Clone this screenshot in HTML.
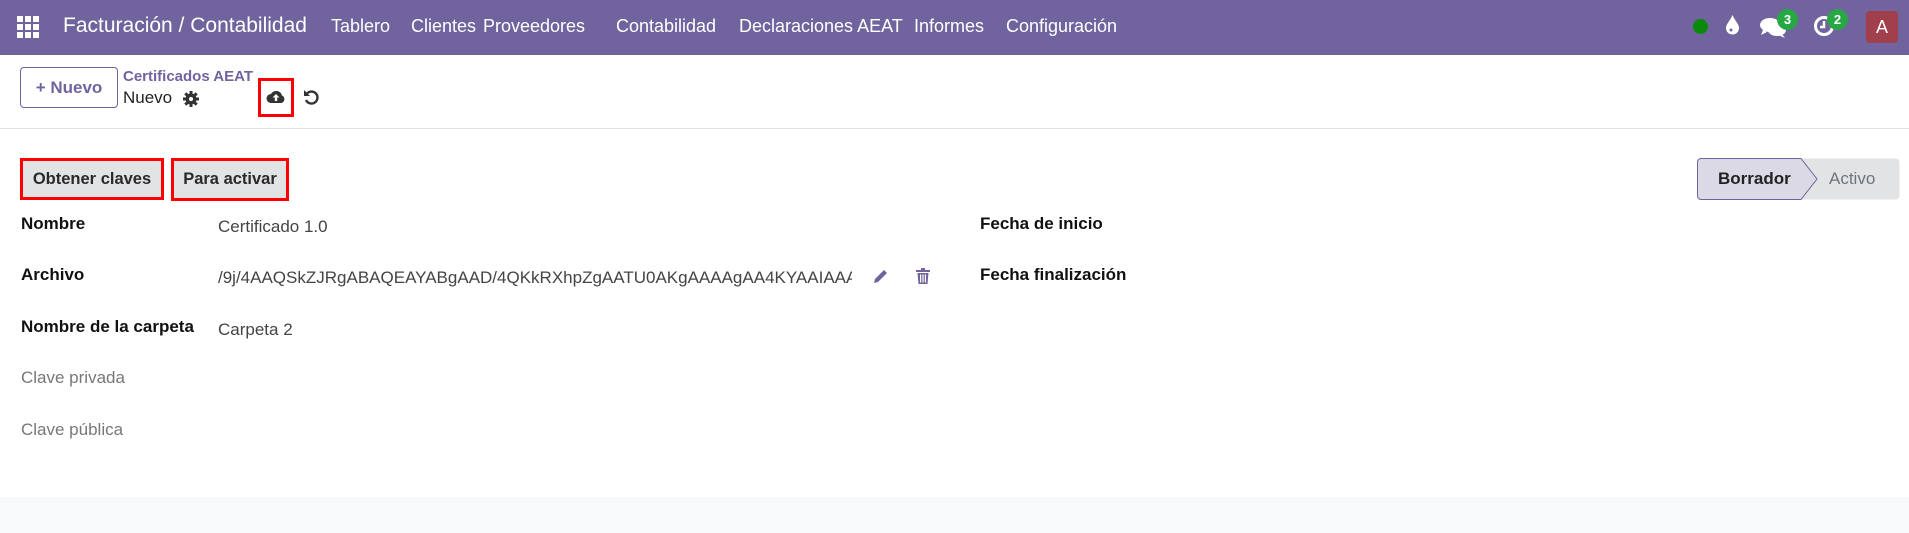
<!DOCTYPE html>
<html><head><meta charset="utf-8"><style>
*{box-sizing:border-box;margin:0;padding:0}
body{width:1909px;height:533px;overflow:hidden;background:#fff;font-family:"Liberation Sans",sans-serif;color:#212529;position:relative}
.nav{position:absolute;left:0;top:0;width:1909px;height:55px;background:#71639e;color:#fff}
.nav span{position:absolute;top:16px;font-size:18px;white-space:nowrap}
.abs{position:absolute;white-space:nowrap}
.btn{position:absolute;background:#e2e3e5;border:3px solid #f00;font-size:16.5px;font-weight:bold;color:#2a2a2a;display:flex;align-items:center;justify-content:center}
.lbl{position:absolute;left:21px;font-size:17px;font-weight:bold;color:#111}
.val{position:absolute;left:218px;font-size:17px;color:#444}
.badge{position:absolute;width:21px;height:21px;border-radius:50%;background:#28a745;color:#fff;font-size:13px;font-weight:bold;text-align:center;line-height:21px}
</style></head><body>
<div class="nav">
<svg class="abs" style="left:17px;top:16px" width="22" height="22" viewBox="0 0 22 22" fill="#fff"><rect x="0" y="0" width="6" height="6"/><rect x="8" y="0" width="6" height="6"/><rect x="16" y="0" width="6" height="6"/><rect x="0" y="8" width="6" height="6"/><rect x="8" y="8" width="6" height="6"/><rect x="16" y="8" width="6" height="6"/><rect x="0" y="16" width="6" height="6"/><rect x="8" y="16" width="6" height="6"/><rect x="16" y="16" width="6" height="6"/></svg>
<span style="left:63px;top:14px;font-size:21px">Facturación / Contabilidad</span>
<span style="left:331px">Tablero</span>
<span style="left:411px">Clientes</span>
<span style="left:483px">Proveedores</span>
<span style="left:616px">Contabilidad</span>
<span style="left:739px">Declaraciones AEAT</span>
<span style="left:914px">Informes</span>
<span style="left:1006px">Configuración</span>
<div class="abs" style="left:1693px;top:19px;width:15px;height:15px;border-radius:50%;background:#0a8a0a"></div>
<svg class="abs" style="left:1726px;top:15px" width="13" height="20" viewBox="0 0 13 20"><path d="M6.5 0C4 6 0 9 0 13a6.5 6.5 0 0013 0C13 9 9 6 6.5 0z" fill="#fff"/><circle cx="5" cy="15" r="1.5" fill="#71639e"/></svg>
<svg class="abs" style="left:1760px;top:17px" width="26" height="22" viewBox="0 0 26 22" fill="#fff"><ellipse cx="10" cy="8" rx="10" ry="7"/><path d="M3 13l-2 5 6-3z"/><ellipse cx="17" cy="13" rx="9" ry="6"/><path d="M22 17l3 4-7-3z"/></svg>
<div class="badge" style="left:1777px;top:9px">3</div>
<svg class="abs" style="left:1813px;top:15px" width="22" height="22" viewBox="0 0 22 22"><circle cx="11" cy="11" r="8.5" fill="none" stroke="#fff" stroke-width="3"/><path d="M11 6v6h-4" stroke="#fff" stroke-width="2.5" fill="none"/></svg>
<div class="badge" style="left:1827px;top:9px">2</div>
<div class="abs" style="left:1866px;top:11px;width:32px;height:32px;border-radius:4px;background:#a1404c;color:#fff;font-size:18px;text-align:center;line-height:32px">A</div>
</div>
<div class="abs" style="left:20px;top:67px;width:98px;height:41px;border:1px solid #71639e;border-radius:4px;color:#71639e;font-size:17px;font-weight:bold;display:flex;align-items:center;justify-content:center">+ Nuevo</div>
<div class="abs" style="left:123px;top:68px;font-size:15px;font-weight:bold;color:#71639e">Certificados AEAT</div>
<div class="abs" style="left:123px;top:88px;font-size:17px;color:#222">Nuevo</div>
<svg class="abs" style="left:183px;top:91px" width="16" height="16" viewBox="0 0 16 16"><circle cx="8" cy="8" r="5.5" fill="#333"/><g stroke="#333" stroke-width="3"><path d="M8 0v16M0 8h16M2.3 2.3l11.4 11.4M13.7 2.3L2.3 13.7"/></g><circle cx="8" cy="8" r="2" fill="#fff"/></svg>
<div class="abs" style="left:258px;top:78px;width:36px;height:39px;border:3px solid #f00"></div>
<svg class="abs" style="left:266px;top:88px" width="20" height="16" viewBox="0 0 20 16"><path d="M5 15a4.5 4.5 0 010-9 6 6 0 0111 1.5 4 4 0 01-.5 7.5z" fill="#333"/><path d="M10 6l-3.5 3.5h2.3V13h2.4V9.5h2.3z" fill="#fff"/></svg>
<svg class="abs" style="left:303px;top:88px" width="16" height="17" viewBox="0 0 16 17"><path d="M4 5.5A6 6 0 1 1 3 12" fill="none" stroke="#333" stroke-width="2.4"/><path d="M1 2v6h6z" fill="#333"/></svg>
<div class="abs" style="left:0;top:128px;width:1909px;height:1px;background:#dee2e6"></div>
<div class="btn" style="left:20px;top:158px;width:144px;height:42px">Obtener claves</div>
<div class="btn" style="left:171px;top:158px;width:118px;height:43px">Para activar</div>
<svg class="abs" style="left:1697px;top:158px" width="203" height="42" viewBox="0 0 203 42"><rect x="0.5" y="0.5" width="202" height="41" rx="4" fill="#e2e3e5"/><path d="M4 0.5h100l16 20.5-16 20.5H4a3.5 3.5 0 01-3.5-3.5V4A3.5 3.5 0 014 0.5z" fill="#dcd9e7" stroke="#71639e"/></svg>
<div class="abs" style="left:1718px;top:169px;font-size:17px;font-weight:bold;color:#222">Borrador</div>
<div class="abs" style="left:1829px;top:169px;font-size:17px;color:#6c757d">Activo</div>
<div class="lbl" style="top:214px">Nombre</div>
<div class="val" style="top:217px">Certificado 1.0</div>
<div class="lbl" style="top:265px">Archivo</div>
<div class="val" style="top:268px;width:634px;overflow:hidden">/9j/4AAQSkZJRgABAQEAYABgAAD/4QKkRXhpZgAATU0AKgAAAAgAA4KYAAIAAAA</div>
<svg class="abs" style="left:873px;top:268px" width="16" height="16" viewBox="0 0 16 16"><path d="M1 15l1-4 9-9 3 3-9 9z" fill="#71639e"/></svg>
<svg class="abs" style="left:916px;top:268px" width="14" height="16" viewBox="0 0 14 16" fill="#71639e"><rect x="0" y="2" width="14" height="2"/><rect x="5" y="0" width="4" height="2"/><path d="M1.5 5h11l-1 11h-9z"/><g fill="#fff"><rect x="4" y="6.5" width="1.2" height="8"/><rect x="6.4" y="6.5" width="1.2" height="8"/><rect x="8.8" y="6.5" width="1.2" height="8"/></g></svg>
<div class="lbl" style="top:317px">Nombre de la carpeta</div>
<div class="val" style="top:320px">Carpeta 2</div>
<div class="abs" style="left:21px;top:368px;font-size:17px;color:#777">Clave privada</div>
<div class="abs" style="left:21px;top:420px;font-size:17px;color:#777">Clave pública</div>
<div class="abs" style="left:980px;top:214px;font-size:17px;font-weight:bold;color:#111">Fecha de inicio</div>
<div class="abs" style="left:980px;top:265px;font-size:17px;font-weight:bold;color:#111">Fecha finalización</div>
<div class="abs" style="left:0;top:497px;width:1909px;height:36px;background:#f8f9fa"></div>
</body></html>
